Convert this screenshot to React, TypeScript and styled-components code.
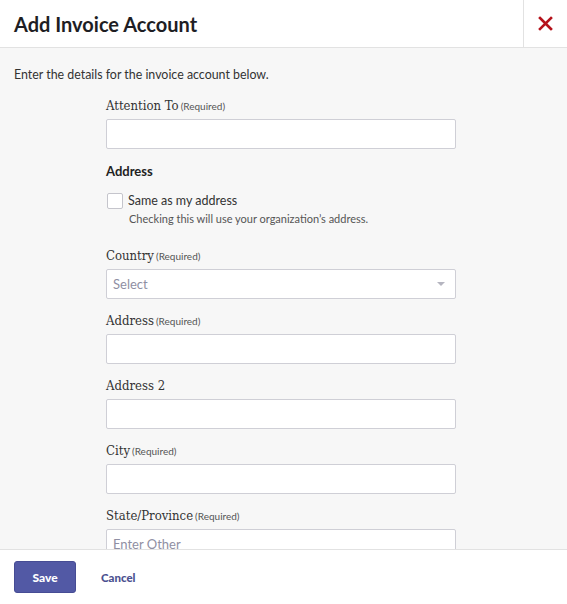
import React from 'react';
import styled, {createGlobalStyle} from "styled-components";

const GlobalStyle = createGlobalStyle`
    html, body {
        margin: 0;
        padding: 0;
        height: 100%;
        background: #ffffff;
        font-family: Lato, "Noto Sans", sans-serif;
        color: #333333;
    }
    #root {
        height: 100%;
    }
    * {
        box-sizing: border-box;
    }
`

const Modal = styled.div`
    display: flex;
    flex-direction: column;
    height: 100vh;
    background: #ffffff;
`

const Header = styled.header`
    display: flex;
    align-items: stretch;
    height: 48px;
    flex-shrink: 0;
    border-bottom: 1px solid #e2e2e2;
`

const Title = styled.h1`
    flex: 1;
    margin: 0;
    padding: 0 14px;
    display: flex;
    align-items: center;
    font-family: Lato, "Noto Sans", sans-serif;
    font-size: 20px;
    font-weight: 700;
    color: #1e1e24;
`

const CloseButton = styled.button`
    width: 44px;
    border: none;
    border-left: 1px solid #e2e2e2;
    background: transparent;
    display: flex;
    align-items: center;
    justify-content: center;
    padding: 0;
    cursor: pointer;
`

const Body = styled.main`
    flex: 1;
    overflow: hidden;
    background: #f7f7f7;
    padding: 19px 14px 0;
`

const Intro = styled.p`
    margin: 0 0 15px;
    font-size: 12.4px;
    line-height: 16px;
    color: #333333;
`

const Form = styled.form`
    width: 350px;
    margin-left: 92px;
    display: flex;
    flex-direction: column;
`

const Field = styled.div`
    display: flex;
    flex-direction: column;
    margin-bottom: 14px;
`

const Label = styled.label`
    font-family: "DejaVu Serif Condensed", "DejaVu Serif", serif;
    font-size: 13px;
    color: #333333;
    margin-bottom: 5px;
    line-height: 16px;
`

const Required = styled.span`
    font-family: Lato, "Noto Sans", sans-serif;
    font-size: 10px;
    color: #555555;
    margin-left: 2px;
`

const Input = styled.input`
    height: 30px;
    width: 100%;
    border: 1px solid #cfcfd6;
    border-radius: 2px;
    background: #ffffff;
    padding: 0 6px;
    font-family: Lato, "Noto Sans", sans-serif;
    font-size: 13px;
    color: #333333;
    outline: none;

    &::placeholder {
        color: #8f8fa3;
    }
`

const SelectBox = styled.div`
    height: 30px;
    border: 1px solid #cfcfd6;
    border-radius: 2px;
    background: #ffffff;
    padding: 0 8px 0 6px;
    display: flex;
    align-items: center;
    justify-content: space-between;
    font-size: 13px;
    color: #8f8fa3;
`

const Caret = styled.span`
    width: 0;
    height: 0;
    border-left: 4px solid transparent;
    border-right: 4px solid transparent;
    border-top: 4px solid #b5b5c0;
    margin-right: 2px;
`

const SectionTitle = styled.div`
    font-size: 13px;
    font-weight: 700;
    line-height: 16px;
    color: #222222;
    margin: 0 0 14px;
`

const CheckRow = styled.label`
    display: flex;
    align-items: center;
    gap: 5px;
    font-size: 12.5px;
    line-height: 16px;
    color: #333333;
`

const CheckBox = styled.span`
    width: 16px;
    height: 16px;
    border: 1px solid #c5c5cc;
    border-radius: 2px;
    background: #ffffff;
    margin-left: 1px;
`

const Help = styled.div`
    font-size: 11px;
    line-height: 13px;
    color: #555555;
    margin: 3px 0 23px 23px;
`

const Footer = styled.footer`
    height: 55px;
    flex-shrink: 0;
    border-top: 1px solid #e2e2e2;
    display: flex;
    align-items: center;
    gap: 25px;
    padding: 0 14px;
`

const PrimaryButton = styled.button`
    width: 62px;
    height: 32px;
    background: #5259a5;
    border: 1px solid #464c94;
    border-radius: 3px;
    color: #ffffff;
    font-family: Lato, "Noto Sans", sans-serif;
    font-size: 12px;
    font-weight: 900;
    cursor: pointer;
`

const LinkButton = styled.button`
    border: none;
    background: transparent;
    padding: 0;
    color: #4b5190;
    font-family: Lato, "Noto Sans", sans-serif;
    font-size: 11.5px;
    font-weight: 900;
    cursor: pointer;
`

const CloseIcon = () => (
    <svg width="15" height="15" viewBox="0 0 15 15">
        <path d="M2 2 L13 13 M13 2 L2 13" stroke="#b5121b" strokeWidth="2.6" strokeLinecap="square"/>
    </svg>
)

type TextFieldProps = {
    label: string,
    required?: boolean,
    placeholder?: string,
}

const TextField = ({label, required, placeholder}: TextFieldProps) => (
    <Field>
        <Label>
            {label}
            {required && <Required>(Required)</Required>}
        </Label>
        <Input placeholder={placeholder}/>
    </Field>
)

const App = () => {
    return (
        <>
            <GlobalStyle/>
            <Modal>
                <Header>
                    <Title>Add Invoice Account</Title>
                    <CloseButton aria-label="Close"><CloseIcon/></CloseButton>
                </Header>
                <Body>
                    <Intro>Enter the details for the invoice account below.</Intro>
                    <Form>
                        <TextField label="Attention To" required/>
                        <SectionTitle>Address</SectionTitle>
                        <CheckRow>
                            <CheckBox/>
                            Same as my address
                        </CheckRow>
                        <Help>Checking this will use your organization’s address.</Help>
                        <Field>
                            <Label>
                                Country
                                <Required>(Required)</Required>
                            </Label>
                            <SelectBox>
                                Select
                                <Caret/>
                            </SelectBox>
                        </Field>
                        <TextField label="Address" required/>
                        <TextField label="Address 2"/>
                        <TextField label="City" required/>
                        <TextField label="State/Province" required placeholder="Enter Other"/>
                    </Form>
                </Body>
                <Footer>
                    <PrimaryButton>Save</PrimaryButton>
                    <LinkButton>Cancel</LinkButton>
                </Footer>
            </Modal>
        </>
    );
};

export default App;
